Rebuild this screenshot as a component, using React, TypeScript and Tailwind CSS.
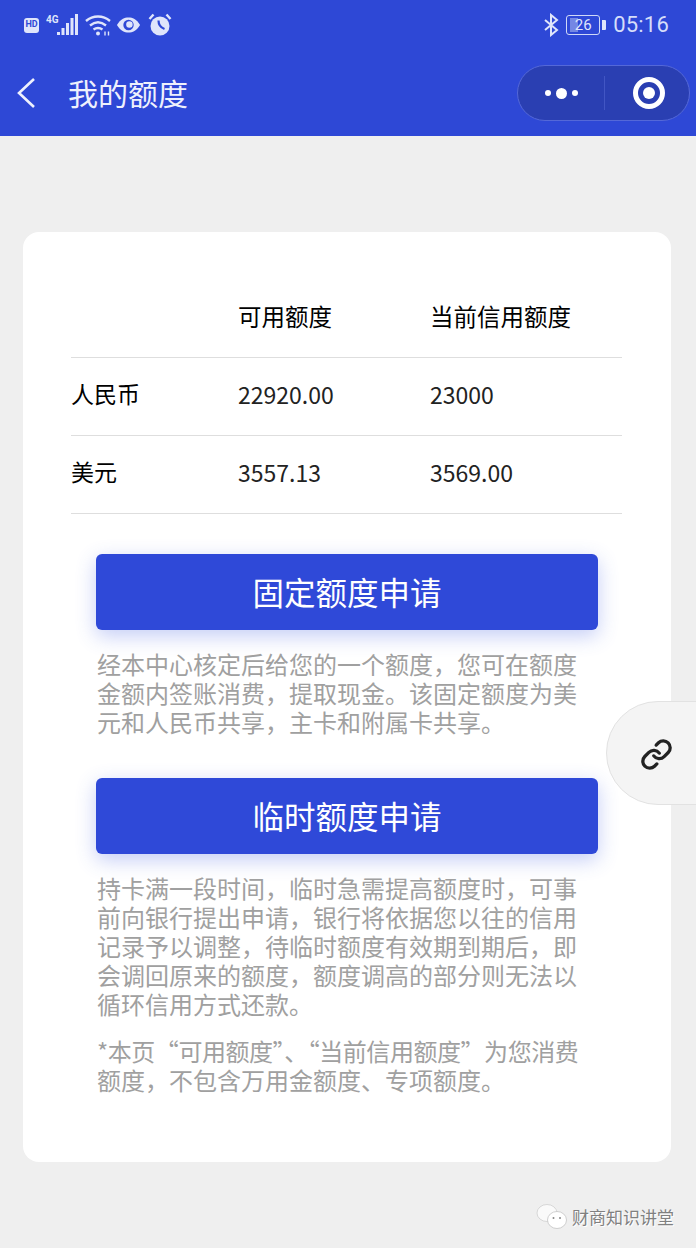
import { Link } from 'lucide-react';

const FONT = "font-['Noto_Sans_CJK_SC','Noto_Sans',sans-serif]";

function StatusBar() {
  return (
    <div className="flex h-[48px] items-center justify-between pl-[24px] pr-[27px] pt-[2px] text-[#dfe5fb]">
      <div className="flex items-center">
        <span className="flex h-[15px] w-[15px] items-center justify-center rounded-[3px] bg-[#dfe5fb] font-['Roboto'] text-[9px] font-bold text-[#2e48d6]">HD</span>
        <svg width="34" height="24" viewBox="0 0 34 24" className="ml-[7px]" fill="currentColor">
          <text x="0" y="10" fontSize="10" fontWeight="700" fontFamily="Roboto">4G</text>
          <rect x="11" y="19" width="3" height="3" />
          <rect x="15.500" y="15" width="3" height="7" />
          <rect x="20" y="10" width="3" height="12" />
          <rect x="24.500" y="5" width="3" height="17" />
          <rect x="29" y="1" width="3" height="21" />
        </svg>
        <svg width="26" height="24" viewBox="0 0 26 24" className="ml-[5px]" fill="none" stroke="currentColor" strokeWidth="2.400">
          <path d="M1 8c7-6 17-6 24 0" />
          <path d="M5 12.500c5-4 11-4 16 0" />
          <path d="M8.500 16.500c3-2 6-2 9 0" />
          <circle cx="13" cy="20.500" r="2" fill="currentColor" stroke="none" />
          <path d="M20 18.500v4M23.500 18.500v4" strokeWidth="1.400" />
        </svg>
        <svg width="25" height="20" viewBox="0 0 27 20" className="ml-[5px]">
          <path d="M1 10C5 3.500 9 1.800 13.500 1.800S22 3.500 26 10c-4 6.500-8 8.200-12.500 8.200S5 16.500 1 10Z" fill="currentColor" />
          <circle cx="13.500" cy="10" r="5.600" fill="#2e48d6" />
          <circle cx="14.500" cy="9.500" r="3.500" fill="currentColor" />
        </svg>
        <svg width="24" height="24" viewBox="0 0 24 24" className="ml-[7px]">
          <circle cx="12" cy="13" r="9.500" fill="currentColor" />
          <path d="M1.500 6l4-4.500M22.500 6l-4-4.500" stroke="currentColor" strokeWidth="2.400" />
          <path d="M10.500 7.500c0 4 2 7 6 8.500" fill="none" stroke="#2e48d6" strokeWidth="2.200" />
        </svg>
      </div>
      <div className="flex items-center">
        <svg width="16" height="24" viewBox="0 0 16 24" fill="none" stroke="currentColor" strokeWidth="2" className="mr-[7px]">
          <path d="M2 7l12 10-6 5V2l6 5L2 17" />
        </svg>
        <div className="flex items-center">
          <div className="relative flex h-[20px] w-[34px] items-center justify-center rounded-[3px] border-[1.500px] border-[#cfd8f7] font-['Roboto'] text-[15px] leading-none">
            <span className="absolute bottom-[2px] left-[3px] top-[2px] w-[8px] bg-[#7487e4]" />
            <span className="relative">26</span>
          </div>
          <span className="ml-[2px] h-[10px] w-[4px] rounded-r-[1px] bg-[#dfe5fb]" />
        </div>
        <span className="ml-[7px] font-['Roboto'] text-[22px] leading-none tracking-[0.2px] text-[#d5ddfa]">05:16</span>
      </div>
    </div>
  );
}

function NavBar() {
  return (
    <div className="flex h-[88px] items-start justify-between pl-[17px] pr-[6px]">
      <div className="flex items-center pt-[20px]">
        <svg width="18" height="32" viewBox="0 0 18 32" fill="none" stroke="#eef1fd" strokeWidth="2.600" className="mt-[2px]">
          <path d="M17 2 2 16l15 14" />
        </svg>
        <span className="ml-[33px] text-[30px] leading-[48px] text-[#eef1fd]">我的额度</span>
      </div>
      <div className="mt-[17px] flex h-[56px] w-[173px] items-center rounded-full border border-[#5468d8] bg-[#2a3fb2]">
        <div className="flex w-[86px] items-center justify-center gap-[5px]">
          <span className="h-[6px] w-[6px] rounded-full bg-white" />
          <span className="h-[11px] w-[11px] rounded-full bg-white" />
          <span className="h-[6px] w-[6px] rounded-full bg-white" />
        </div>
        <div className="h-[34px] w-px bg-[#4256c4]" />
        <div className="flex flex-1 items-center justify-center pl-[4px]">
          <div className="flex h-[32px] w-[32px] items-center justify-center rounded-full border-[5px] border-white">
            <span className="h-[12px] w-[12px] rounded-full bg-white" />
          </div>
        </div>
      </div>
    </div>
  );
}

function Row({ a, b, c, head }: { a: string; b: string; c: string; head?: boolean }) {
  return (
    <div className={`flex h-[78px] items-center border-b border-[#dedede] pb-[4px] text-black ${head ? 'text-[23.500px]' : ''}`}>
      <div className="mb-[2px] w-[167px] text-[23px]">{a}</div>
      <div className={`w-[192px] ${head ? '' : 'text-[23px] text-[#222]'}`}>{b}</div>
      <div className={head ? '' : 'text-[23px] text-[#222]'}>{c}</div>
    </div>
  );
}

function ApplyButton({ label }: { label: string }) {
  return (
    <div className="ml-[25px] flex h-[76px] w-[502px] items-center justify-center rounded-[6px] bg-[#2f49d8] text-[31.500px] text-white shadow-[0_6px_20px_rgba(60,90,225,0.3)]">
      {label}
    </div>
  );
}

function Note({ children, className }: { children: React.ReactNode; className?: string }) {
  return <p className={`ml-[26px] w-[490px] text-[24px] leading-[29px] text-[#a0a0a0] ${className ?? ''}`}>{children}</p>;
}

export default function App() {
  return (
    <div className={`relative h-[1248px] w-[696px] overflow-hidden bg-[#efefef] ${FONT}`}>
      <div className="bg-[#2e48d6]">
        <StatusBar />
        <NavBar />
      </div>

      <div className="ml-[23px] mt-[96px] h-[930px] w-[648px] rounded-[16px] bg-white pl-[48px] pr-[49px] pt-[48px]">
        <Row head a="" b="可用额度" c="当前信用额度" />
        <Row a="人民币" b="22920.00" c="23000" />
        <Row a="美元" b="3557.13" c="3569.00" />

        <div className="mt-[40px]">
          <ApplyButton label="固定额度申请" />
        </div>
        <Note className="mt-[19px]">
          经本中心核定后给您的一个额度，您可在额度金额内签账消费，提取现金。该固定额度为美元和人民币共享，主卡和附属卡共享。
        </Note>
        <div className="mt-[42px]">
          <ApplyButton label="临时额度申请" />
        </div>
        <Note className="mt-[19px]">
          持卡满一段时间，临时急需提高额度时，可事前向银行提出申请，银行将依据您以往的信用记录予以调整，待临时额度有效期到期后，即会调回原来的额度，额度调高的部分则无法以循环信用方式还款。
        </Note>
        <Note className="mt-[18px]">
          <span className="whitespace-nowrap tracking-[-0.45px]">*本页“可用额度”、“当前信用额度”为您消费</span>
          <br />
          额度，不包含万用金额度、专项额度。
        </Note>
      </div>

      {/* floating share tab */}
      <div className="absolute left-[606px] top-[701px] flex h-[104px] w-[100px] items-center rounded-l-[52px] border border-[#e2e2e2] bg-[#f4f4f4] pl-[33px] pt-[3px]">
        <Link size={33} strokeWidth={2.400} className="text-[#222]" />
      </div>

      {/* watermark */}
      <div className="absolute left-[536px] top-[1204px] flex items-center">
        <svg width="32" height="26" viewBox="0 0 32 26">
          <ellipse cx="11" cy="9" rx="10" ry="8.500" fill="#fafafa" stroke="#cfcfcf" strokeWidth="0.800" />
          <ellipse cx="21" cy="16" rx="9.500" ry="8.500" fill="#ffffff" stroke="#c4c4c4" strokeWidth="0.800" />
          <circle cx="17.500" cy="14" r="1" fill="#888" />
          <circle cx="24" cy="14" r="1" fill="#888" />
        </svg>
        <span className="ml-[4px] text-[17px] text-[#808080] [text-shadow:1px_1px_0_#ffffff]">财商知识讲堂</span>
      </div>
    </div>
  );
}
